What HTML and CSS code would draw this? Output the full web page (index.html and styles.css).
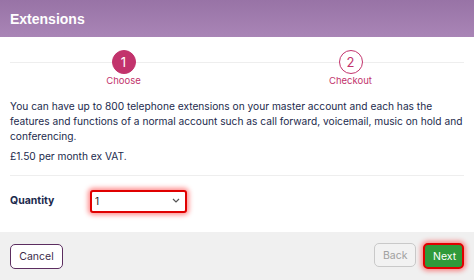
FILE: index.html
```html
<!DOCTYPE html>
<html lang="en">
<head>
  <meta charset="UTF-8" />
  <meta name="viewport" content="width=device-width, initial-scale=1.0" />
  <title>Extensions</title>
  <link rel="stylesheet" href="styles.css">
</head>
<body>
  <div class="modal">
    <div class="modal-header">Extensions</div>

    <div class="modal-body">
      <div class="steps">
        <div class="step active">
          <div class="circle">1</div>
          <div class="label">Choose</div>
        </div>
        <div class="step">
          <div class="circle">2</div>
          <div class="label">Checkout</div>
        </div>
      </div>

      <p class="intro">You can have up to 800 telephone extensions on your master account and each has the features and functions of a normal account such as call forward, voicemail, music on hold and conferencing.</p>
      <p class="price">£1.50 per month ex VAT.</p>

      <div class="field">
        <label for="qty">Quantity</label>
        <div class="select-wrap">
          <select id="qty">
            <option>1</option>
            <option>2</option>
            <option>3</option>
          </select>
          <svg class="caret" width="8" height="5" viewBox="0 0 8 5"><path d="M1 1l3 3 3-3" fill="none" stroke="#555" stroke-width="1.2"/></svg>
        </div>
      </div>
    </div>

    <div class="modal-footer">
      <button class="btn btn-cancel">Cancel</button>
      <div class="right">
        <button class="btn btn-back" disabled>Back</button>
        <button class="btn btn-next">Next</button>
      </div>
    </div>
  </div>
</body>
</html>
```

FILE: styles.css
```css
body {
  margin: 0;
  padding: 0;
  font-family: 'Inter', sans-serif;
  background: #fff;
}
.modal {
  width: 474px;
  height: 280px;
  display: flex;
  flex-direction: column;
  background: white;
}
.modal-header {
  height: 37px;
  box-sizing: border-box;
  padding: 0 10px;
  display: flex;
  align-items: center;
  background: linear-gradient(to bottom, #9873a6, #a985b6);
  color: white;
  font-family: 'Liberation Sans', Arial, sans-serif;
  font-weight: bold;
  font-size: 14px;
}
.modal-body {
  padding: 0 10px;
  flex: 1;
}
.steps {
  display: flex;
  position: relative;
  padding-top: 13px;
}
.steps::before {
  content: "";
  position: absolute;
  left: 0;
  right: 0;
  top: 25px;
  border-top: 1px solid #eeeeee;
}
.step {
  flex: 1;
  display: flex;
  flex-direction: column;
  align-items: center;
  position: relative;
}
.circle {
  width: 24px;
  height: 24px;
  box-sizing: border-box;
  border-radius: 50%;
  border: 1px solid #c2336c;
  background: white;
  color: #c2336c;
  font-size: 13px;
  display: flex;
  align-items: center;
  justify-content: center;
}
.step.active .circle {
  background: #c2336c;
  color: white;
}
.label {
  margin-top: 1px;
  font-size: 9.5px;
  color: #c2336c;
}
.intro, .price {
  color: #1c2a4d;
  font-size: 10.2px;
  line-height: 15px;
  margin: 0;
}
.intro {
  margin-top: 13px;
}
.price {
  margin-top: 5px;
  padding-bottom: 11px;
  border-bottom: 1px solid #eeeeee;
}
.field {
  display: flex;
  align-items: center;
  margin-top: 13px;
}
.field label {
  width: 80px;
  color: #1c2a4d;
  font-weight: bold;
  font-size: 10.5px;
}
.select-wrap {
  position: relative;
}
.field select {
  width: 97px;
  height: 23px;
  box-sizing: border-box;
  border: 2px solid #e00000;
  border-radius: 3px;
  box-shadow: 0 0 5px 2px rgba(255, 0, 0, 0.45);
  background: white;
  appearance: none;
  padding: 0 3px;
  font-family: 'Inter', sans-serif;
  font-size: 10px;
  color: #222;
}
.caret {
  position: absolute;
  right: 7px;
  top: 9px;
}
.modal-footer {
  height: 48px;
  background: #f0f0f0;
  display: flex;
  align-items: center;
  justify-content: space-between;
  padding: 0 10px;
}
.right {
  display: flex;
  gap: 7px;
}
.btn {
  font-family: 'Inter', sans-serif;
  font-size: 10.5px;
  border-radius: 5px;
  height: 24px;
  padding: 0 8px;
  cursor: pointer;
}
.btn-cancel {
  border: 1.5px solid #5c2e60;
  background: white;
  color: #3b2b4a;
  width: 53px;
  height: 25px;
}
.btn-back {
  border: 1px solid #c9c9c9;
  background: #f2f2f2;
  color: #a0a0a0;
  width: 42px;
}
.btn-next {
  border: 2px solid #e00000;
  background: #2f9a3a;
  color: white;
  width: 41px;
  height: 26px;
  box-shadow: 0 0 5px 2px rgba(255, 0, 0, 0.45);
}
```
